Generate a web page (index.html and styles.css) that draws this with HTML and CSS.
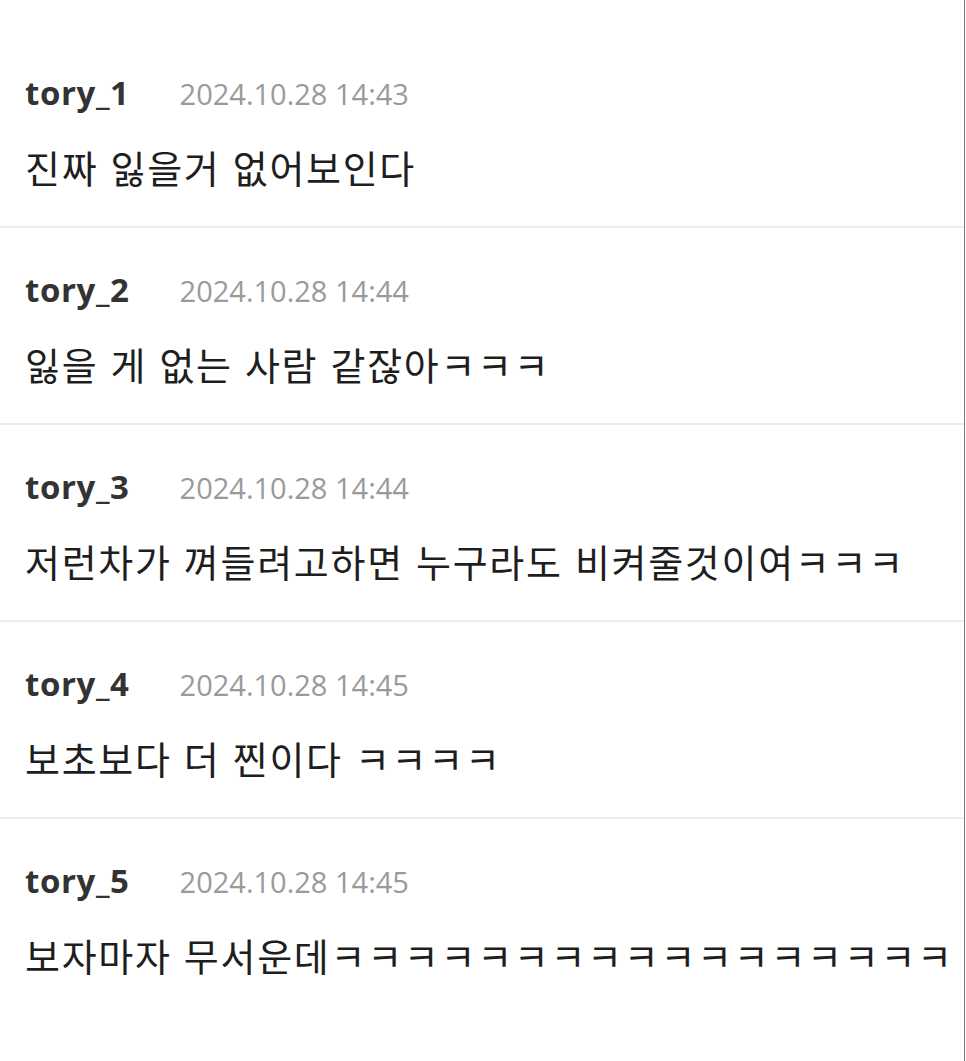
FILE: index.html
```html
<!DOCTYPE html>
<html>
<head lang="ko">
  <meta charset="UTF-8">
  <title>댓글</title>
  <link rel="stylesheet" href="styles.css">
</head>
<body>
  <div class="commentList">
    <div class="comment">
      <div class="commentHead"><span class="commentName">tory_1</span><span class="commentDate">2024.10.28 14:43</span></div>
      <div class="commentText">진짜 잃을거 없어보인다</div>
    </div>
    <div class="comment">
      <div class="commentHead"><span class="commentName">tory_2</span><span class="commentDate">2024.10.28 14:44</span></div>
      <div class="commentText">잃을 게 없는 사람 같잖아ㅋㅋㅋ</div>
    </div>
    <div class="comment">
      <div class="commentHead"><span class="commentName">tory_3</span><span class="commentDate">2024.10.28 14:44</span></div>
      <div class="commentText">저런차가 껴들려고하면 누구라도 비켜줄것이여ㅋㅋㅋ</div>
    </div>
    <div class="comment">
      <div class="commentHead"><span class="commentName">tory_4</span><span class="commentDate">2024.10.28 14:45</span></div>
      <div class="commentText">보초보다 더 찐이다 ㅋㅋㅋㅋ</div>
    </div>
    <div class="comment">
      <div class="commentHead"><span class="commentName">tory_5</span><span class="commentDate">2024.10.28 14:45</span></div>
      <div class="commentText">보자마자 무서운데ㅋㅋㅋㅋㅋㅋㅋㅋㅋㅋㅋㅋㅋㅋㅋㅋㅋ</div>
    </div>
  </div>
</body>
</html>
```

FILE: styles.css
```css
html, body {
  margin: 0;
  background: #fff;
}
body {
  font-family: "Open Sans", "Noto Sans CJK KR", sans-serif;
}
.commentList {
  width: 965px;
  min-height: 1061px;
  border-right: 1px solid #7a7a7a;
  padding-top: 31px;
  box-sizing: border-box;
}
.comment {
  height: 197px;
  box-sizing: border-box;
  padding: 40px 0 0 25px;
  border-bottom: 2px solid #ededed;
}
.comment:last-child {
  border-bottom: none;
}
.commentHead {
  display: flex;
  align-items: baseline;
  gap: 50px;
  height: 44px;
  line-height: 44px;
}
.commentName {
  font-size: 33px;
  font-weight: bold;
  letter-spacing: 0.6px;
  color: #333;
}
.commentDate {
  font-size: 29px;
  color: #9a9a9a;
}
.commentText {
  margin-top: 30px;
  font-family: "Noto Sans CJK KR", sans-serif;
  font-size: 38px;
  letter-spacing: 1.7px;
  word-spacing: 2px;
  line-height: 44px;
  color: #1e1e1e;
  white-space: nowrap;
}
```
